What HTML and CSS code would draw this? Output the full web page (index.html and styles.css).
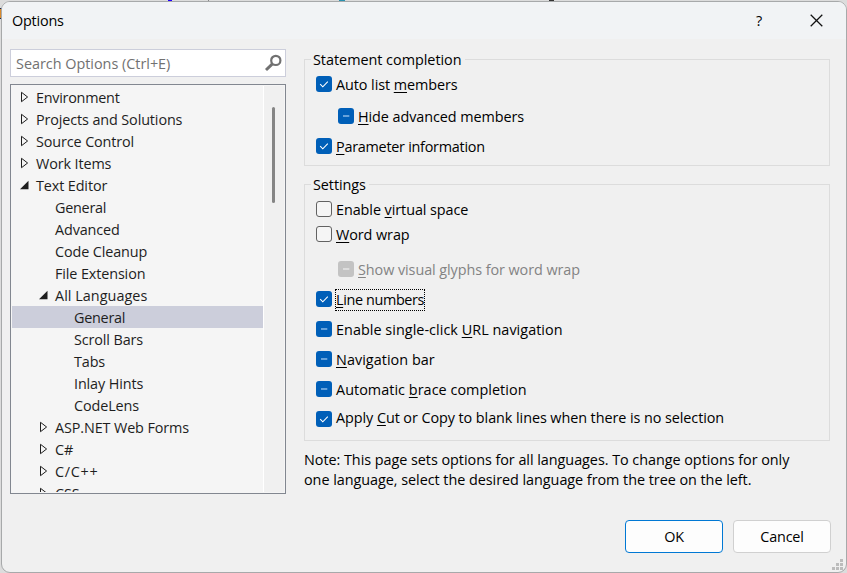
FILE: index.html
```html
<!DOCTYPE html>
<html lang="en">
<head>
<meta charset="utf-8">
<title>Options</title>
<link rel="stylesheet" href="styles.css">
</head>
<body>
<svg class="defs" width="0" height="0">
  <symbol id="closed" viewBox="0 0 10 12"><path d="M1.5 1.3v9.4L7.6 6z" fill="none" stroke="#1e1e1e" stroke-width="1"/></symbol>
  <symbol id="open" viewBox="0 0 10 12"><path d="M8.5 1.8v8.4H0z" fill="#1e1e1e"/></symbol>
  <symbol id="check" viewBox="0 0 16 16"><path d="M4.2 8.2l2.6 2.6 5-5.2" fill="none" stroke="#fff" stroke-width="1.1"/></symbol>
  <symbol id="dash" viewBox="0 0 16 16"><path d="M5 8h6.3" stroke="#8ab8e6" stroke-width="1.4"/></symbol>
  <symbol id="dash-off" viewBox="0 0 16 16"><path d="M5 8h6.3" stroke="#e6e6e6" stroke-width="1.4"/></symbol>
</svg>
<i class="behind orange"></i><i class="behind blue"></i><i class="behind teal"></i><i class="behind dark"></i><i class="behind gray"></i>
<main class="dialog">
  <header class="titlebar">
    <span class="title">Options</span>
    <span class="help">?</span>
    <svg class="close" width="13" height="13" viewBox="0 0 13 13"><path d="M.7.7l11.6 11.6M12.3.7L.7 12.3" stroke="#111" stroke-width="1.25"/></svg>
  </header>
  <div class="content">
    <aside class="side">
      <div class="search"><span>Search Options (Ctrl+E)</span>
        <svg width="18" height="18" viewBox="0 0 18 18"><circle cx="11.8" cy="6.4" r="4.6" fill="none" stroke="#717171" stroke-width="2.2"/><path d="M8.4 9.9L2 16" stroke="#717171" stroke-width="3"/></svg>
      </div>
      <div class="tree">
        <ul class="items">
          <li><svg><use href="#closed"/></svg><span class="tight">Environment</span></li>
          <li><svg><use href="#closed"/></svg><span>Projects and Solutions</span></li>
          <li><svg><use href="#closed"/></svg><span>Source Control</span></li>
          <li><svg><use href="#closed"/></svg><span>Work Items</span></li>
          <li><svg><use href="#open"/></svg><span>Text Editor</span></li>
          <li class="l2"><svg></svg><span class="tight">General</span></li>
          <li class="l2"><svg></svg><span>Advanced</span></li>
          <li class="l2"><svg></svg><span>Code Cleanup</span></li>
          <li class="l2"><svg></svg><span>File Extension</span></li>
          <li class="l2"><svg><use href="#open"/></svg><span class="wide">All Languages</span></li>
          <li class="l3 selected"><svg></svg><span class="tight">General</span></li>
          <li class="l3"><svg></svg><span>Scroll Bars</span></li>
          <li class="l3"><svg></svg><span>Tabs</span></li>
          <li class="l3"><svg></svg><span>Inlay Hints</span></li>
          <li class="l3"><svg></svg><span>CodeLens</span></li>
          <li class="l2"><svg><use href="#closed"/></svg><span>ASP.NET Web Forms</span></li>
          <li class="l2"><svg><use href="#closed"/></svg><span>C#</span></li>
          <li class="l2"><svg><use href="#closed"/></svg><span class="widest">C/C++</span></li>
          <li class="l2"><svg><use href="#closed"/></svg><span>CSS</span></li>
        </ul>
        <div class="scroll"><div class="thumb"></div></div>
      </div>
    </aside>
    <section class="page">
      <div class="group completion">
        <div class="legend wide">Statement completion</div>
        <div class="option"><svg class="box on"><use href="#check"/></svg><span>Auto list <u>m</u>embers</span></div>
        <div class="option sub gap12"><svg class="box on"><use href="#dash"/></svg><span><u>H</u>ide advanced members</span></div>
        <div class="option gap10"><svg class="box on"><use href="#check"/></svg><span class="tight"><u>P</u>arameter information</span></div>
      </div>
      <div class="group settings">
        <div class="legend">Settings</div>
        <div class="option"><svg class="box"></svg><span>Enable <u>v</u>irtual space</span></div>
        <div class="option gap5"><svg class="box"></svg><span><u>W</u>ord wrap</span></div>
        <div class="option sub gap15 disabled"><svg class="box"><use href="#dash-off"/></svg><span><u>S</u>how visual glyphs for word wrap</span></div>
        <div class="option gap10"><svg class="box on"><use href="#check"/></svg><span class="focus"><u>L</u>ine numbers</span></div>
        <div class="option gap10"><svg class="box on"><use href="#dash"/></svg><span class="wide">Enable single-click <u>U</u>RL navigation</span></div>
        <div class="option gap10"><svg class="box on"><use href="#dash"/></svg><span class="wide"><u>N</u>avigation bar</span></div>
        <div class="option gap10"><svg class="box on"><use href="#dash"/></svg><span class="wide">Automatic <u>b</u>race completion</span></div>
        <div class="option gap10 last"><svg class="box on"><use href="#check"/></svg><span>Apply <u>C</u>ut or Copy to blank lines when there is no selection</span></div>
      </div>
      <p class="note">Note: This page sets options for all languages. To change options for only<br>one language, select the desired language from the tree on the left.</p>
      <div class="buttons"><button class="primary">OK</button><button>Cancel</button></div>
    </section>
  </div>
  <svg class="grip" width="11" height="11" viewBox="0 0 11 11" fill="#bcbcbc"><path d="M8 0h3v3H8zM4 4h3v3H4zM8 4h3v3H8zM0 8h3v3H0zM4 8h3v3H4zM8 8h3v3H8z"/></svg>
</main>
</body>
</html>
```

FILE: styles.css
```css
* { box-sizing: border-box; }
body {
  margin: 0;
  width: 847px;
  height: 573px;
  padding: 1px 0 0 1px;
  overflow: hidden;
  background: #dcdcdc;
  font: 14.4px/20px "Open Sans", "Noto Sans", sans-serif;
  letter-spacing: -0.2px;
  color: #000;
}
.defs { position: absolute; }
.behind { position: absolute; top: 0; height: 1px; }
.orange { left: 0; top: 8px; width: 2px; height: 11px; background: #d98a2c; border: solid #1a2a50; border-width: 1px 0; }
.blue { left: 168px; width: 4px; background: #20f; }
.teal { left: 339px; width: 6px; background: #2b91af; }
.dark { left: 549px; width: 5px; background: #333; }
.gray { left: 208px; width: 1px; background: #888; }
.dialog {
  position: relative;
  width: 846px;
  height: 572px;
  border: 1px solid #a7a9aa;
  border-radius: 9px;
  background: #f0f0f0;
  overflow: hidden;
}
.titlebar {
  display: flex;
  align-items: center;
  height: 37px;
  padding-left: 10px;
  background: #f1f3f5;
}
.title { flex: 1; }
.help { width: 10px; margin-right: 46px; text-align: center; }
.close { margin-right: 23px; }
.content { display: flex; gap: 18px; padding: 10px 0 0 8px; }
.side { width: 276px; }
.search {
  display: flex;
  align-items: center;
  justify-content: space-between;
  height: 28px;
  padding: 0 3px 0 5px;
  border: 1px solid #cccedb;
  background: #fff;
  color: #717171;
  letter-spacing: -0.01px;
}
.search span { padding-top: 2px; }
.tree {
  display: flex;
  height: 410px;
  margin-top: 7px;
  padding: 1px;
  border: 1px solid #828790;
  background: #f5f5f5;
  letter-spacing: -0.12px;
}
.items {
  width: 252px;
  margin: 0;
  padding: 0;
  list-style: none;
  overflow: hidden;
  border-right: 1px solid #fff;
  color: #1e1e1e;
}
.items li { display: flex; align-items: center; height: 22px; padding-left: 8px; white-space: nowrap; }
.items span { padding-top: 2px; }
.items svg { width: 10px; height: 12px; margin-right: 6px; }
.items .l2 { padding-left: 27px; }
.items .l3 { padding-left: 46px; }
.items .selected { background: #cccedb; }
.scroll { flex: 1; padding: 21px 0 0 8px; background: #f0f0f0; }
.thumb { width: 3px; height: 96px; border-radius: 2px; background: #858585; }
.page { width: 527px; padding-top: 10px; letter-spacing: -0.07px; }
.tight { letter-spacing: -0.26px; }
.wide { letter-spacing: 0.04px; }
.widest { letter-spacing: 0.7px; }
.group { width: 526px; border: 1px solid #dcdcdc; padding-left: 11px; }
.completion { height: 107px; }
.settings { height: 257px; margin-top: 18px; }
.legend { width: max-content; height: 20px; margin: -10px 0 4px -5px; padding: 0 3px 0 2px; background: #f0f0f0; }
.legend.wide { letter-spacing: -0.02px; }
.option { display: flex; align-items: center; height: 20px; white-space: nowrap; }
.option span { position: relative; top: 1px; }
.box { width: 16px; height: 16px; margin-right: 4px; border: 1px solid #626262; border-radius: 3px; background: #f5f5f5; }
.box.on { border: 0; background: #005fb8; }
.sub { padding-left: 22px; }
.disabled { color: #838383; }
.disabled .box { border: 0; background: #c3c3c3; }
.gap5 { margin-top: 5px; }
.gap10 { margin-top: 10px; }
.gap12 { margin-top: 12px; }
.gap15 { margin-top: 15px; }
.option.last span { top: 0; margin-top: -2px; }
u { text-decoration-thickness: 1px; text-underline-offset: 2px; }
.focus { outline: 1px dotted #000; letter-spacing: -0.36px; }
.note { margin: 9px 0 0; white-space: nowrap; letter-spacing: -0.04px; }
.buttons { display: flex; justify-content: flex-end; gap: 10px; margin-top: 30px; }
button {
  width: 98px;
  height: 33px;
  padding: 0;
  border: 1px solid #d0d0d0;
  border-radius: 4px;
  background: #fdfdfd;
  font: inherit;
  letter-spacing: -0.2px;
  color: #000;
}
button.primary { border-color: #0078d4; }
.grip { position: absolute; right: 3px; bottom: 2px; }
```
